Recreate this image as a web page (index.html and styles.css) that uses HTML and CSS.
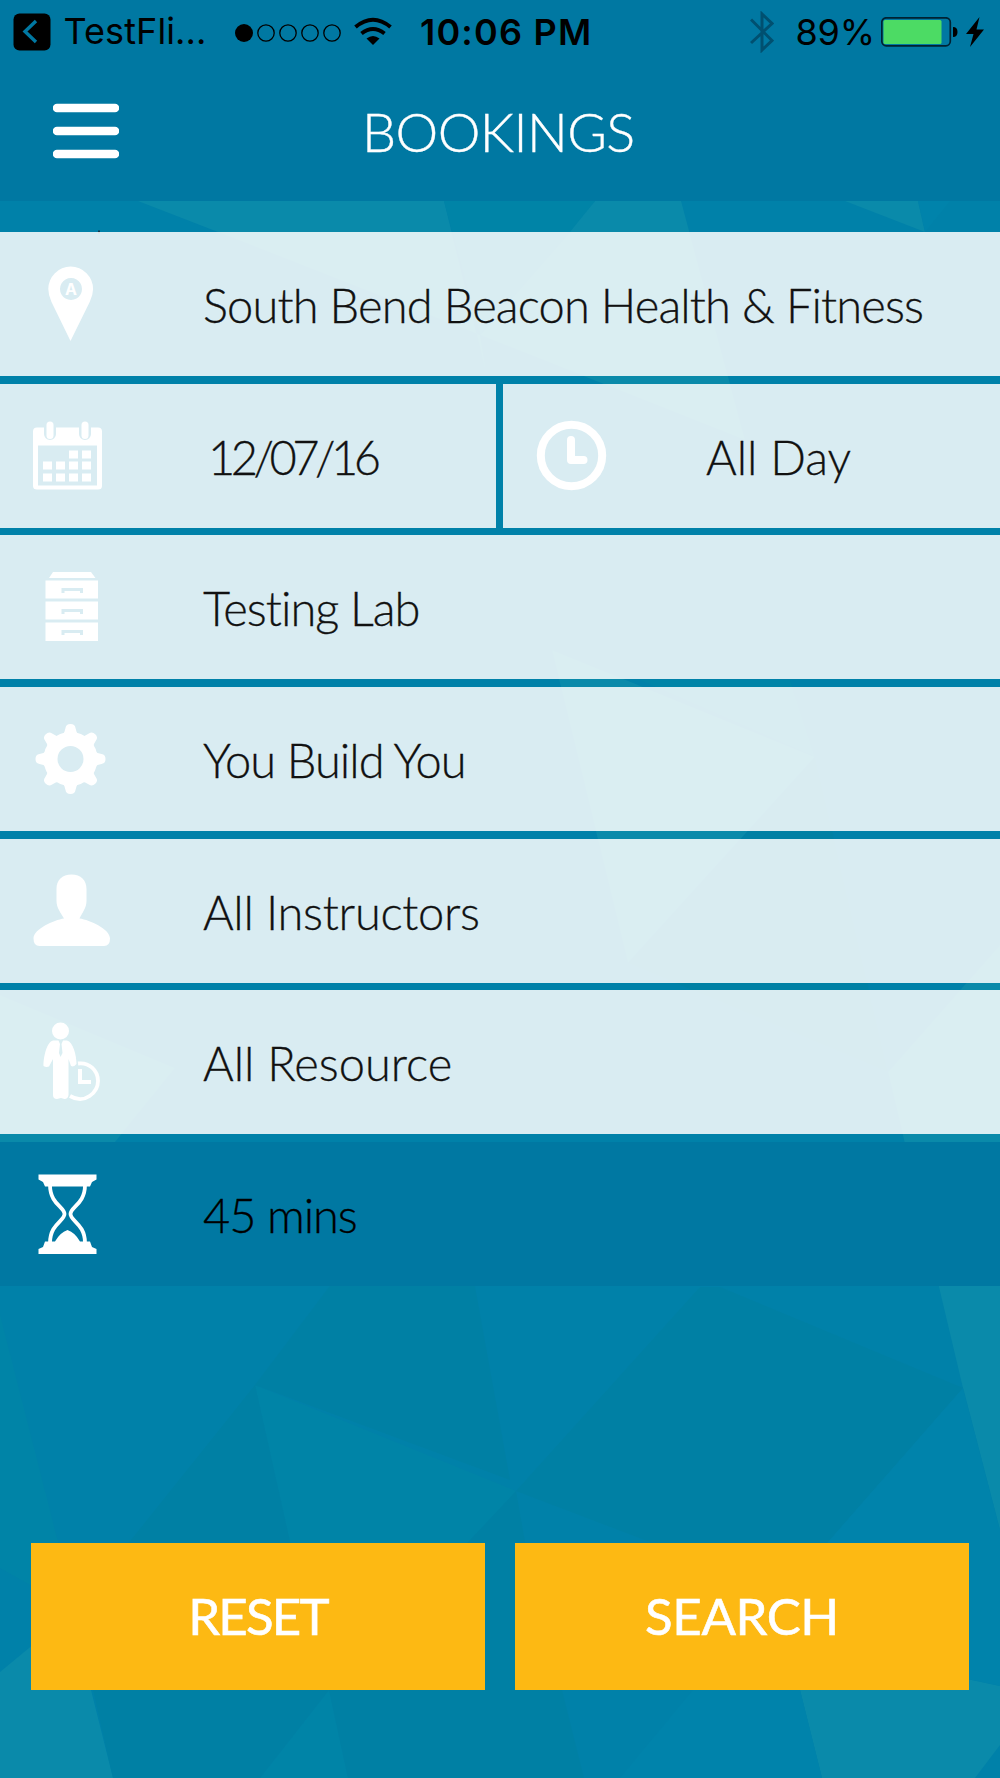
FILE: index.html
```
<!doctype html>
<html lang="en-US">
<head><meta charset="utf-8">
	<meta name="viewport" content="width=device-width">
	<title>Bookings</title>
<link rel="stylesheet" href="styles.css">
</head>
<body>
<div class="app">
	<svg class="backdrop" viewBox="0 0 1000 1778" aria-hidden="true">
		<g class="lite">
			<path d="M138 201H444L486 372 480 335 218 232z"/>
			<path d="M595 201H681L745 440 480 335z"/>
			<path d="M845 201H918L925 232z"/>
			<path d="M552 650 815 757 628 963z"/>
			<path d="M888 1072 1000 945V1530L963 1388z"/>
			<path d="M0 995 175 1068 115 1142 0 1272z"/>
			<path d="M0 1672 75 1610 91 1690 113 1778H0z"/>
			<path d="M785 1640 1000 1686V1745L975 1778H822L800 1690z"/>
		</g>
		<g class="green">
			<path d="M444 201H595L570 232 480 335z"/>
			<path d="M0 1315 58 1542 75 1610 0 1568z"/>
			<path d="M255 1385 516 1491 475 1542 329 1690 290 1542z"/>
			<path d="M329 1690 348 1778H260z"/>
			<path d="M640 680H790L815 757z"/>
		</g>
		<g class="dark">
			<path d="M342 1270H472L510 1480 255 1385z"/>
			<path d="M516 1491 700 1287 720 1287 963 1388 828 1542 693 1690 650 1542z"/>
			<path d="M255 1385 290 1542 329 1690 260 1778H113L75 1610z"/>
			<path d="M516 1491 525 1542 584 1778H348L329 1690z"/>
			<path d="M815 757 888 1072 628 963z"/>
		</g>
		<g class="blue">
			<path d="M963 1388 1000 1530V1686L785 1640 828 1542z"/>
			<path d="M693 1690H800L822 1778H620z"/>
			<path d="M918 201H950L925 232z"/>
		</g>
		<path d="M99 230.500v3" stroke="#123" stroke-width="1.500"/>
	</svg>
	<header>
		<div class="status">
			<svg class="back" viewBox="0 0 38 38"><rect x=".5" y=".5" width="37" height="37" rx="6"/><path d="M23 8 12 18.5 23 29" fill="none" stroke="#0078a2" stroke-width="3.4"/></svg>
			<span class="from">TestFli...</span>
			<svg class="signal" viewBox="0 0 106 20"><circle cx="9" cy="10" r="9"/><g fill="none" stroke="#000" stroke-width="1.3"><circle cx="31" cy="10" r="8.2"/><circle cx="53" cy="10" r="8.2"/><circle cx="75" cy="10" r="8.2"/><circle cx="97" cy="10" r="8.2"/></g></svg>
			<svg class="wifi" viewBox="0 0 38 29"><path d="M19 28 12.5 21.500Q19 16.500 25.500 21.500z"/><g fill="none" stroke="#000" stroke-width="4"><path d="M7.500 16.500Q19 7.500 30.500 16.500M1.500 10Q19-4.500 36.500 10"/></g></svg>
			<span class="time">10:06 PM</span>
			<svg class="bt" viewBox="0 0 24 42"><path d="M1 8.500 22 29.500 12 39V3L22 12.500 1 32" fill="none" stroke="#005070" stroke-width="3"/></svg>
			<span class="pct">89%</span>
			<svg class="bat" viewBox="0 0 77 30"><rect x=".8" y=".8" width="68.500" height="28" rx="4.500" fill="none" stroke="#023" stroke-width="1.7"/><rect x="2.500" y="3" width="58" height="24" rx="1.500" fill="#4cdb64"/><path d="M72 10q4.500 0 4.500 5t-4.500 5z"/></svg>
			<svg class="bolt" viewBox="0 0 18 30"><path d="M13.500 0 0 17H7.500L4 30 18 12.500H10.500z"/></svg>
		</div>
		<div class="bar">
			<svg class="menu" viewBox="0 0 66 56"><path d="M4 5H62M4 28H62M4 51H62"/></svg>
			<h1>BOOKINGS</h1>
		</div>
	</header>
	<form autocomplete="off">
		<div class="row">
			<svg viewBox="0 0 203 144"><path fill-rule="evenodd" d="M70.500 109 51.500 70Q48.300 63 48.300 57a22.400 22.400 0 0 1 44.800 0Q93 63 89.700 70zM71 46a11 11 0 1 0 .01 0z"/><text x="71" y="62.500" class="pin">A</text></svg>
			<span class="place">South Bend Beacon Health &amp; Fitness</span>
		</div>
		<div class="pair">
			<div class="row">
				<svg viewBox="0 0 203 144"><path fill-rule="evenodd" d="M37 43.500H44V50a6 6 0 0 0 12 0V43.500H79V50a6 6 0 0 0 12 0V43.500H98q4 0 4 4V102q0 3.500-4 3.500H37q-4 0-4-3.500V47.500q0-4 4-4zM38 61.500V101.500H97V61.500z"/><rect x="46.500" y="37.500" width="7" height="17.500" rx="3.500"/><rect x="81.500" y="37.500" width="7" height="17.500" rx="3.500"/><path d="M69 66.500h9v8h-9zM82 66.500h9v8h-9zM43 77.500h9v8h-9zM56 77.500h9v8h-9zM69 77.500h9v8h-9zM82 77.500h9v8h-9zM43 89.500h9v8h-9zM56 89.500h9v8h-9zM69 89.500h9v8h-9zM82 89.500h9v8h-9z"/></svg>
				<span class="date">12/07/16</span>
			</div>
			<div class="row hours">
				<svg viewBox="0 0 203 144"><g class="line"><circle cx="68.500" cy="71.500" r="30.700"/><path d="M68 56V76H80.500"/></g></svg>
				<span>All Day</span>
			</div>
		</div>
		<div class="row">
			<svg viewBox="0 0 203 144"><path d="M53 37H91L95.500 43H49zM45.500 45.500H98V63.500H45.500zM45.500 66.500H98V84.500H45.500zM45.500 87.500H98V106H45.500z"/><path class="slot" d="M63 58V54.500H81.500V58M63 79V75.500H81.500V79M63 100V96.500H81.500V100"/></svg>
			<span class="lab">Testing Lab</span>
		</div>
		<div class="row">
			<svg viewBox="0 0 203 144"><circle cx="70.500" cy="72" r="20" fill="none" stroke="#fff" stroke-width="14"/><path id="tooth" d="M57 50Q64 50 65.500 41 66 37 70.500 37T75.500 41Q77 50 84 50L80 57H61z"/><use href="#tooth" transform="rotate(45 70.500 72)"/><use href="#tooth" transform="rotate(90 70.500 72)"/><use href="#tooth" transform="rotate(135 70.500 72)"/><use href="#tooth" transform="rotate(180 70.500 72)"/><use href="#tooth" transform="rotate(225 70.500 72)"/><use href="#tooth" transform="rotate(270 70.500 72)"/><use href="#tooth" transform="rotate(315 70.500 72)"/></svg>
			<span class="service">You Build You</span>
		</div>
		<div class="row">
			<svg viewBox="0 0 203 144"><path d="M71.500 35.500C81 35.500 86.500 41 86.500 50V62C86.500 69 82 74 79.500 79.500 90 81 110 90 110 99.500Q110 107 104 107H39.500Q33.500 107 33.500 99.500C33.500 90 54 81 64 79.500 61 74 56.500 69 56.500 62V50C56.500 41 62 35.500 71.500 35.500z"/></svg>
			<span class="staff">All Instructors</span>
		</div>
		<div class="row">
			<svg viewBox="0 0 203 144"><circle cx="60.500" cy="41" r="8.500"/><path d="M53 50.500H58.500L60 54 59 63 60.500 67 62.500 63 61.500 54 63 50.500H67C73 52 76.500 65 76.500 74Q74 77.500 71 76L68.500 69V105Q68 109 64.500 109L61 108 57 109Q53 109 53 105V69L49 76.500Q46 77.500 43.500 76C43.500 66 47 52 53 50.500z"/><path fill="none" stroke="#fff" stroke-width="3.800" d="M78 73.500C89 72 98 80 98 91S85 115 70 106"/><path fill="none" stroke="#fff" stroke-width="4" d="M80 79V92H91"/></svg>
			<span>All Resource</span>
		</div>
		<div class="row picked">
			<svg viewBox="0 0 203 144"><path d="M38.500 32.500H96.500V37.500L92 40 90 44.500H45L43 40 38.500 37.500zM38.500 112V107L43 105 45 99.500H55Q60 90.500 67.500 88 75 90.500 80 99.500H90L92 105 96.500 107V112z"/><path fill="none" stroke="#fff" stroke-width="3.800" d="M50 43C50 62 64.500 65 64.500 72S50 82 50 101M85 43C85 62 70.500 65 70.500 72S85 82 85 101"/></svg>
			<span class="mins">45 mins</span>
		</div>
		<div class="actions">
			<button type="reset">RESET</button>
			<button type="submit">SEARCH</button>
		</div>
	</form>
</div>
</body>
</html>
```
FILE: styles.css
```
body{margin:0}
.app{position:relative;height:1778px;overflow:hidden;background:#0081a9;font-family:Lato,"Liberation Sans",sans-serif;font-variant-ligatures:none}
.backdrop{position:absolute;left:0;top:0;width:1000px;height:1778px}
.lite{fill:#0a8aaa}
.green{fill:#0084a7}
.dark{fill:#0080a4}
.blue{fill:#0083ab}
header{position:relative;height:201px;background:#0078a2}
.status{display:flex;height:63px;align-items:center;font:36px/63px Inter,sans-serif;color:#000}
.status svg{flex:none}
.status span{flex:none;white-space:nowrap}
.back{width:38px;height:38px;margin-left:12.500px}
.from{width:156px;margin-left:13px;letter-spacing:.1px}
.signal{width:106px;height:20px;margin:2px 0 0 15.500px}
.wifi{width:38px;height:29px;margin-left:13px}
.time{width:316px;margin-left:28px;padding-top:1px;font-weight:600;letter-spacing:1.200px}
.bt{width:24px;height:42px;margin-left:14px}
.pct{width:78px;margin-left:21.500px;padding-top:1px;letter-spacing:-.2px}
.bat{width:77px;height:30px;margin-left:7.500px}
.bolt{width:18px;height:30px;margin-left:8px}
.bar{display:flex;align-items:center;height:138px}
.menu{width:66px;height:56px;margin:0 246px 3px 52.500px;stroke:#fff;stroke-width:8.500;stroke-linecap:round}
h1{margin:0 0 2px -2.500px;font-size:54px;font-weight:300;letter-spacing:-.6px;color:#fff;-webkit-text-stroke:.4px}
form{position:relative;display:flex;flex-direction:column;gap:7.700px;margin-top:31px}
.row{display:flex;align-items:center;height:144px;background:rgba(255,255,255,.85);font-size:47px;font-weight:300;color:#111;white-space:nowrap}
.row svg{flex:none;width:203px;height:144px;fill:#fff}
.row span{padding-top:2px;-webkit-text-stroke:.3px}
.pair{display:grid;grid-template-columns:495.500px 1fr;gap:7.500px}
.row .line{fill:none;stroke:#fff;stroke-width:8;stroke-linecap:round;stroke-linejoin:round}
.row .slot{fill:none;stroke:#d9ecf2;stroke-width:3}
.pin{font:bold 16px Inter,sans-serif;text-anchor:middle}
.place{letter-spacing:-.85px}
.date{margin-left:5px;letter-spacing:-4.500px}
.lab{letter-spacing:-1px}
.service{letter-spacing:-1px}
.staff{letter-spacing:-.3px}
.mins{letter-spacing:-1.100px}
.picked{background:#0078a2;color:#000}
.actions{display:flex;gap:30px;margin:249px 31px 0}
.actions button{flex:1;height:147.500px;padding:0 0 3px;border:0;background:#fdb913;color:#fff;font:400 51px Lato,sans-serif;letter-spacing:-.4px;-webkit-text-stroke:.6px}
.actions [type=reset]{letter-spacing:-1.800px}
```
